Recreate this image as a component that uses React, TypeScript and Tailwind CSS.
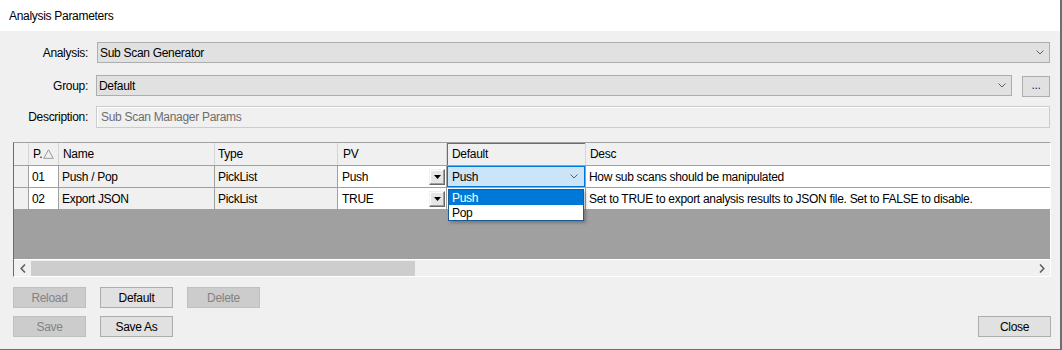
import React from "react";

const rows = [
  {
    p: "01",
    name: "Push / Pop",
    type: "PickList",
    pv: "Push",
    desc: "How sub scans should be manipulated",
  },
  {
    p: "02",
    name: "Export JSON",
    type: "PickList",
    pv: "TRUE",
    desc: "Set to TRUE to export analysis results to JSON file. Set to FALSE to disable.",
  },
];

function Chevron() {
  return (
    <svg width="8" height="5" viewBox="0 0 8 5">
      <path d="M0.5 0.5 L4 4 L7.5 0.5" fill="none" stroke="#606060" strokeWidth="1" />
    </svg>
  );
}

function Combo({ value, className }: { value: string; className: string }) {
  return (
    <div
      className={`flex h-[21px] items-center justify-between border border-[#adadad] bg-[#e1e1e1] pl-[2px] pr-[5px] ${className}`}
    >
      <span>{value}</span>
      <Chevron />
    </div>
  );
}

function DropButton() {
  return (
    <div className="flex h-[16px] w-[16px] items-center justify-center border border-t-[#f0f0f0] border-l-[#f0f0f0] border-r-[#696969] border-b-[#696969] bg-[#e6e6e6] shadow-[inset_-1px_-1px_0_#a0a0a0,inset_1px_1px_0_#ffffff]">
      <svg width="7" height="4" viewBox="0 0 7 4">
        <path d="M0 0H7L3.5 4Z" fill="#000" />
      </svg>
    </div>
  );
}

function Button({ label, disabled, className = "" }: { label: string; disabled?: boolean; className?: string }) {
  return (
    <div
      className={`flex h-[21px] w-[73px] items-center justify-center border ${
        disabled
          ? "border-[#bfbfbf] bg-[#cccccc] text-[#838383]"
          : "border-[#adadad] bg-[#e1e1e1] text-black"
      } ${className}`}
    >
      {label}
    </div>
  );
}

function HeaderRow() {
  return (
    <div className="flex h-[23px] shrink-0 border-b border-[#a0a0a0] bg-[#f0f0f0]">
      <div className="h-full w-[15px] border-r border-[#d5d5d5]" />
      <div className="flex h-full w-[30px] items-center border-r border-[#d5d5d5] pl-[4px]">
        <span>P.</span>
        <svg width="11" height="10" viewBox="0 0 11 10" className="ml-[1px]">
          <path d="M5.5 0.8 L10.3 9.3 L0.7 9.3 Z" fill="none" stroke="#9a9a9a" strokeWidth="1" />
        </svg>
      </div>
      <div className="flex h-full w-[156px] items-center border-r border-[#d5d5d5] pl-[4px]">Name</div>
      <div className="flex h-full w-[123px] items-center border-r border-[#d5d5d5] pl-[3px]">Type</div>
      <div className="flex h-full w-[109px] items-center border-r border-[#d5d5d5] pl-[5px]">PV</div>
      <div className="flex h-full w-[139px] items-center border-r border-[#d5d5d5] pl-[5px] shadow-[inset_1px_1px_0_#6d6d6d]">
        Default
      </div>
      <div className="flex h-full w-[464px] items-center pl-[4px]">Desc</div>
    </div>
  );
}

function DataRow({ row, editing }: { row: (typeof rows)[number]; editing: boolean }) {
  return (
    <div className="flex h-[22px] shrink-0 border-b border-[#a0a0a0]">
      <div className="h-full w-[15px] border-r border-[#a0a0a0] bg-[#f0f0f0]" />
      <div className="flex h-full w-[30px] items-center border-r border-[#a0a0a0] bg-white pl-[3px]">{row.p}</div>
      <div className="flex h-full w-[156px] items-center border-r border-[#a0a0a0] bg-[#f0f0f0] pl-[3px]">
        {row.name}
      </div>
      <div className="flex h-full w-[123px] items-center border-r border-[#a0a0a0] bg-[#f0f0f0] pl-[3px]">
        {row.type}
      </div>
      <div className="flex h-full w-[109px] items-center justify-between border-r border-[#a0a0a0] bg-white pl-[4px] pr-[1px]">
        <span>{row.pv}</span>
        <DropButton />
      </div>
      <div className="h-full w-[139px] border-r border-[#a0a0a0] bg-white">
        {editing && (
          <div className="flex h-[21px] w-[138px] items-center justify-between border border-[#0078d7] bg-[#cce4f7] pl-[4px] pr-[6px]">
            <span>Push</span>
            <Chevron />
          </div>
        )}
      </div>
      <div className="flex h-full w-[464px] items-center bg-white pl-[3px] whitespace-nowrap">{row.desc}</div>
    </div>
  );
}

function Grid() {
  return (
    <div className="relative flex h-[135px] w-[1038px] flex-col border border-l-[#6d6d6d] border-t-[#a0a0a0] border-r-white border-b-white">
      <HeaderRow />
      {rows.map((r, i) => (
        <DataRow key={r.p} row={r} editing={i === 0} />
      ))}
      <div className="flex-1 bg-[#a0a0a0]" />
      <div className="flex h-[17px] shrink-0 items-center border-t border-white bg-[#f0f0f0]">
        <div className="flex h-full w-[17px] items-center justify-center">
          <svg width="6" height="9" viewBox="0 0 6 9">
            <path d="M5 0.5 L1.2 4.5 L5 8.5" fill="none" stroke="#606060" strokeWidth="1.6" />
          </svg>
        </div>
        <div className="h-[15px] w-[384px] bg-[#cdcdcd]" />
        <div className="flex-1" />
        <div className="flex h-full w-[17px] items-center justify-center">
          <svg width="6" height="9" viewBox="0 0 6 9">
            <path d="M1 0.5 L4.8 4.5 L1 8.5" fill="none" stroke="#606060" strokeWidth="1.6" />
          </svg>
        </div>
      </div>

      {/* open picklist of the Default cell */}
      <div className="absolute left-[434px] top-[46px] w-[136px] border border-[#1a5a96] bg-white shadow-[2px_2px_3px_rgba(0,0,0,0.25)]">
        <div className="flex h-[15px] items-center bg-[#0078d7] pl-[3px] text-white">Push</div>
        <div className="flex h-[15px] items-center pl-[3px]">Pop</div>
      </div>
    </div>
  );
}

export default function App() {
  return (
    <div className="h-[350px] w-[1062px] bg-[#2d2a28] font-['Liberation_Sans',Arial,sans-serif] text-[12px] tracking-[-0.3px] text-black">
      <div className="flex h-[350px] w-[1062px] flex-col border-r-2 border-b border-[#6e6e6e] bg-[#f0f0f0]">
        <div className="flex h-[31px] shrink-0 items-center bg-white pl-[9px]">Analysis Parameters</div>

        <div className="flex flex-1 flex-col pt-[11px] pl-[13px] pr-[10px] pb-[12px]">
          <div className="flex items-center">
            <div className="w-[75px] text-right">Analysis:</div>
            <Combo value="Sub Scan Generator" className="ml-[9px] flex-1" />
          </div>

          <div className="mt-[12px] flex items-start">
            <div className="flex h-[21px] w-[75px] items-center justify-end">Group:</div>
            <Combo value="Default" className="ml-[8px] flex-1" />
            <div className="ml-[10px] mt-[1px] flex h-[21px] w-[28px] items-center justify-center border border-[#adadad] bg-[#e1e1e1] pb-[4px] text-[#1a1a6e]">
              ...
            </div>
          </div>

          <div className="mt-[9px] flex items-center">
            <div className="w-[75px] text-right">Description:</div>
            <div className="ml-[8px] flex h-[22px] flex-1 items-center border border-[#cccccc] bg-[#f0f0f0] pl-[4px] text-[#6d6d6d] shadow-[inset_1px_1px_0_#ffffff]">
              Sub Scan Manager Params
            </div>
          </div>

          <div className="mt-[14px]">
            <Grid />
          </div>

          <div className="mt-[10px] flex items-end justify-between">
            <div className="flex flex-col gap-[8px]">
              <div className="flex gap-[14px]">
                <Button label="Reload" disabled />
                <Button label="Default" />
                <Button label="Delete" disabled />
              </div>
              <div className="flex gap-[14px]">
                <Button label="Save" disabled />
                <Button label="Save As" />
              </div>
            </div>
            <Button label="Close" className="-mr-[1px]" />
          </div>
        </div>
      </div>
    </div>
  );
}
